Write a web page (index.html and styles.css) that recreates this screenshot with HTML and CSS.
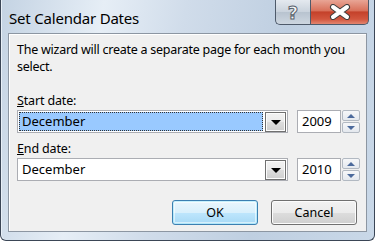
FILE: index.html
```html
<!DOCTYPE html>
<html lang="en">
<head>
  <meta charset="UTF-8" />
  <title>Set Calendar Dates</title>
  <link rel="stylesheet" href="styles.css">
</head>
<body>
  <div class="window">
    <div class="titlebar">
      <span class="title">Set Calendar Dates</span>
      <div class="caption">
        <button class="cap help">?</button>
        <button class="cap close">
          <svg width="22" height="16" viewBox="0 0 22 16">
            <path d="M4 3 L18 13 M18 3 L4 13" stroke="#3e3e3e" stroke-width="6" stroke-linecap="round"/>
            <path d="M4 3 L18 13 M18 3 L4 13" stroke="#fff" stroke-width="4" stroke-linecap="round"/>
          </svg>
        </button>
      </div>
    </div>

    <div class="client">
      <p class="intro">The wizard will create a separate page for each month you select.</p>

      <label class="field-label"><u>S</u>tart date:</label>
      <div class="row">
        <div class="combo">
          <span class="combo-text selected">December</span>
          <span class="drop"><i class="tri"></i></span>
        </div>
        <div class="year">2009</div>
        <div class="spin">
          <span class="spin-btn"><i class="up"></i></span>
          <span class="spin-btn"><i class="down"></i></span>
        </div>
      </div>

      <label class="field-label"><u>E</u>nd date:</label>
      <div class="row">
        <div class="combo">
          <span class="combo-text">December</span>
          <span class="drop"><i class="tri"></i></span>
        </div>
        <div class="year">2010</div>
        <div class="spin">
          <span class="spin-btn"><i class="up"></i></span>
          <span class="spin-btn"><i class="down"></i></span>
        </div>
      </div>

      <div class="actions">
        <button class="btn default">OK</button>
        <button class="btn">Cancel</button>
      </div>
    </div>
  </div>
</body>
</html>
```

FILE: styles.css
```css
body {
  margin: 0;
  font-family: 'Noto Sans', 'Open Sans', sans-serif;
  background: #fff;
}

.window {
  width: 373px;
  height: 240px;
  border: 1px solid #3b4656;
  border-top: none;
  border-radius: 0 0 6px 6px;
  background: linear-gradient(100deg, #c4d3e3 0%, #e6eef6 25%, #d0dcea 45%, #bfcfe1 70%, #c9d8e8 100%);
  box-shadow: inset 1px 0 0 #e8f0f8;
}

.titlebar {
  height: 33px;
  display: flex;
  justify-content: space-between;
  align-items: flex-start;
}

.title {
  margin: 8px 0 0 8px;
  font-size: 15px;
  color: #000;
  letter-spacing: -0.2px;
}

.caption {
  display: flex;
  margin-right: 5px;
}

.cap {
  height: 25px;
  border: 1px solid #4e5a6a;
  border-top: none;
  padding: 0;
  margin: 0;
  display: flex;
  align-items: center;
  justify-content: center;
}

.help {
  width: 35px;
  border-radius: 0 0 0 5px;
  border-right: none;
  background: linear-gradient(#e4e9ef, #c9d2dc 50%, #b8c3cf 51%, #cdd6e0);
  font-family: 'DejaVu Sans', sans-serif;
  font-size: 18px;
  font-weight: bold;
  color: #f4f6f8;
  -webkit-text-stroke: 1px #5a626c;
}

.close {
  width: 59px;
  border-radius: 0 0 5px 0;
  background: linear-gradient(#e8a595, #d8705a 45%, #c4412a 50%, #d2563e 80%, #e38670);
}

.client {
  margin-left: 7px;
  width: 357px;
  height: 197px;
  border: 1px solid #8c96a2;
  background: #f0f0f0;
  box-shadow: inset 1px 1px 0 #fff;
  font-size: 12.5px;
  color: #000;
}

.intro {
  margin: 7px 0 0 8px;
  width: 340px;
  line-height: 17px;
  letter-spacing: -0.25px;
}

.field-label {
  display: block;
  margin: 17px 0 1px 8px;
  line-height: 17px;
  letter-spacing: -0.15px;
}

.row + .field-label {
  margin-top: 7px;
}

.row {
  display: flex;
  align-items: flex-start;
  margin-left: 8px;
  height: 23px;
}

.combo {
  width: 267px;
  border: 1px solid #abadb3;
  background: #fff;
  display: flex;
  padding: 1px;
  box-sizing: content-box;
  height: 19px;
}

.combo-text {
  flex: 1;
  padding-left: 3px;
  line-height: 19px;
  font-size: 13px;
}

.combo-text.selected {
  background: #99c9ff;
  outline: 1px dotted #333;
  outline-offset: -1px;
  margin-right: 2px;
}

.drop {
  width: 19px;
  height: 18px;
  border: 1px solid #707070;
  background: linear-gradient(#f2f2f2, #ebebeb 50%, #dddddd 51%, #cfcfcf);
  display: flex;
  align-items: center;
  justify-content: center;
  box-shadow: inset 0 0 0 1px #fcfcfc;
}

.tri {
  width: 0;
  height: 0;
  border-left: 5px solid transparent;
  border-right: 5px solid transparent;
  border-top: 5px solid #000;
}

.year {
  margin-left: 9px;
  border: 1px solid #abadb3;
  background: #fff;
  line-height: 21px;
  padding-left: 4px;
  box-sizing: border-box;
  width: 44px;
  height: 23px;
  font-size: 13px;
}

.spin {
  margin-left: 1px;
  display: flex;
  flex-direction: column;
  gap: 1px;
}

.spin-btn {
  width: 16px;
  height: 9px;
  border: 1px solid #b2b9c2;
  border-radius: 2px;
  background: linear-gradient(#f6f7f9, #e4e8ee);
  display: flex;
  align-items: center;
  justify-content: center;
}

.up {
  border-left: 4px solid transparent;
  border-right: 4px solid transparent;
  border-bottom: 4px solid #4c6a9c;
}

.down {
  border-left: 4px solid transparent;
  border-right: 4px solid transparent;
  border-top: 4px solid #4c6a9c;
}

.actions {
  display: flex;
  justify-content: flex-end;
  gap: 13px;
  margin: 19px 9px 0 0;
}

.btn {
  width: 86px;
  height: 25px;
  border: 1px solid #707070;
  border-radius: 3px;
  background: linear-gradient(#f2f2f2, #ebebeb 50%, #dddddd 51%, #cfcfcf);
  box-shadow: inset 0 0 0 1px #fcfcfc;
  font-family: 'Noto Sans', 'Open Sans', sans-serif;
  font-size: 12.5px;
  color: #000;
  padding: 0;
}

.btn.default {
  border-color: #3c7fb1;
  background: linear-gradient(#eaf6fd, #d9f0fc 50%, #bee6fd 51%, #a7d9f5);
  box-shadow: inset 0 0 0 1px #48d7fb44, inset 0 0 0 2px #fff8;
}
```
